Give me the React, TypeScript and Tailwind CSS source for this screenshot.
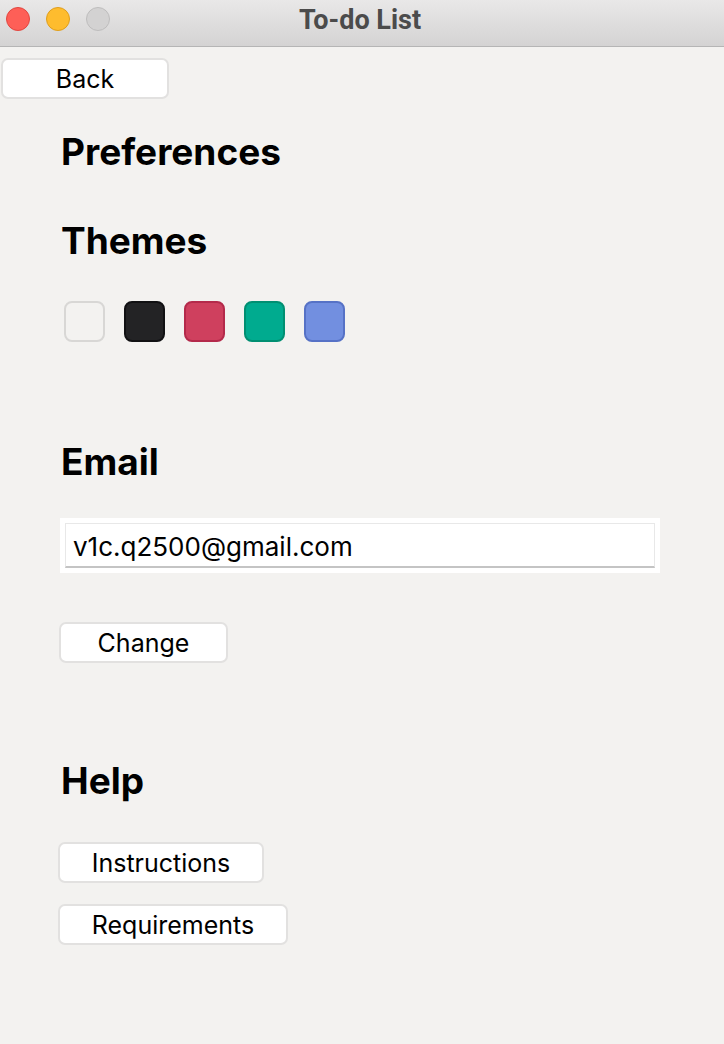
export default function App() {
  const swatches = [
    "bg-[#f3f2f0] border-[#d8d7d5]",
    "bg-[#232325] border-[#111113]",
    "bg-[#cf405e] border-[#b42a4b]",
    "bg-[#00ab8f] border-[#008f72]",
    "bg-[#728fe0] border-[#5672c6]",
  ];

  const btn =
    "h-[41px] pt-[2px] bg-white border-2 border-[#e2e1e0] rounded-[7px] text-[25px] leading-none";

  return (
    <div className="w-[724px] h-[1044px] bg-[#f3f2f0] font-['Inter',sans-serif] text-black overflow-hidden">
      {/* Title bar */}
      <div className="relative h-[47px] bg-gradient-to-b from-[#e9e8e8] to-[#d4d3d3] border-b border-[#b5b5b5] flex items-center justify-center">
        <div className="absolute left-[6px] top-[7px] flex gap-[16px]">
          <span className="w-[24px] h-[24px] rounded-full bg-[#fe5f57] border border-[#e2463f]" />
          <span className="w-[24px] h-[24px] rounded-full bg-[#febc2e] border border-[#df9e1c]" />
          <span className="w-[24px] h-[24px] rounded-full bg-[#d3d2d2] border border-[#bebdbd]" />
        </div>
        <span className="font-['Roboto',sans-serif] font-bold text-[27px] text-[#4b4b4b] -mt-[6px] ml-[-4px]">
          To-do List
        </span>
      </div>

      {/* Back */}
      <div className="pt-[11px] pl-[1px]">
        <button className={`w-[168px] ${btn}`}>Back</button>
      </div>

      <div className="pl-[61px]">
        <h1 className="mt-[33px] text-[37px] font-bold leading-[40px]">Preferences</h1>

        <h2 className="mt-[49px] text-[37px] font-bold leading-[40px]">Themes</h2>
        <div className="mt-[40px] ml-[3px] flex gap-[19px]">
          {swatches.map((c, i) => (
            <div key={i} className={`w-[41px] h-[41px] rounded-[8px] border-2 ${c}`} />
          ))}
        </div>

        <h2 className="mt-[100px] text-[37px] font-bold leading-[40px]">Email</h2>
        <div className="mt-[36px] -ml-[1px] w-[600px] h-[55px] bg-white p-[5px]">
          <div className="h-full border border-[#e8e8e8] border-b-[#c4c4c4] border-b-2 flex items-center pl-[7px] pt-[3px] text-[26px]">
            v1c.q2500@gmail.com
          </div>
        </div>
        <button className={`mt-[49px] -ml-[2px] w-[169px] ${btn}`}>Change</button>

        <h2 className="mt-[98px] text-[37px] font-bold leading-[40px]">Help</h2>
        <div className="flex flex-col items-start gap-[21px] mt-[41px] -ml-[3px]">
          <button className={`w-[206px] ${btn}`}>Instructions</button>
          <button className={`w-[230px] ${btn}`}>Requirements</button>
        </div>
      </div>
    </div>
  );
}
